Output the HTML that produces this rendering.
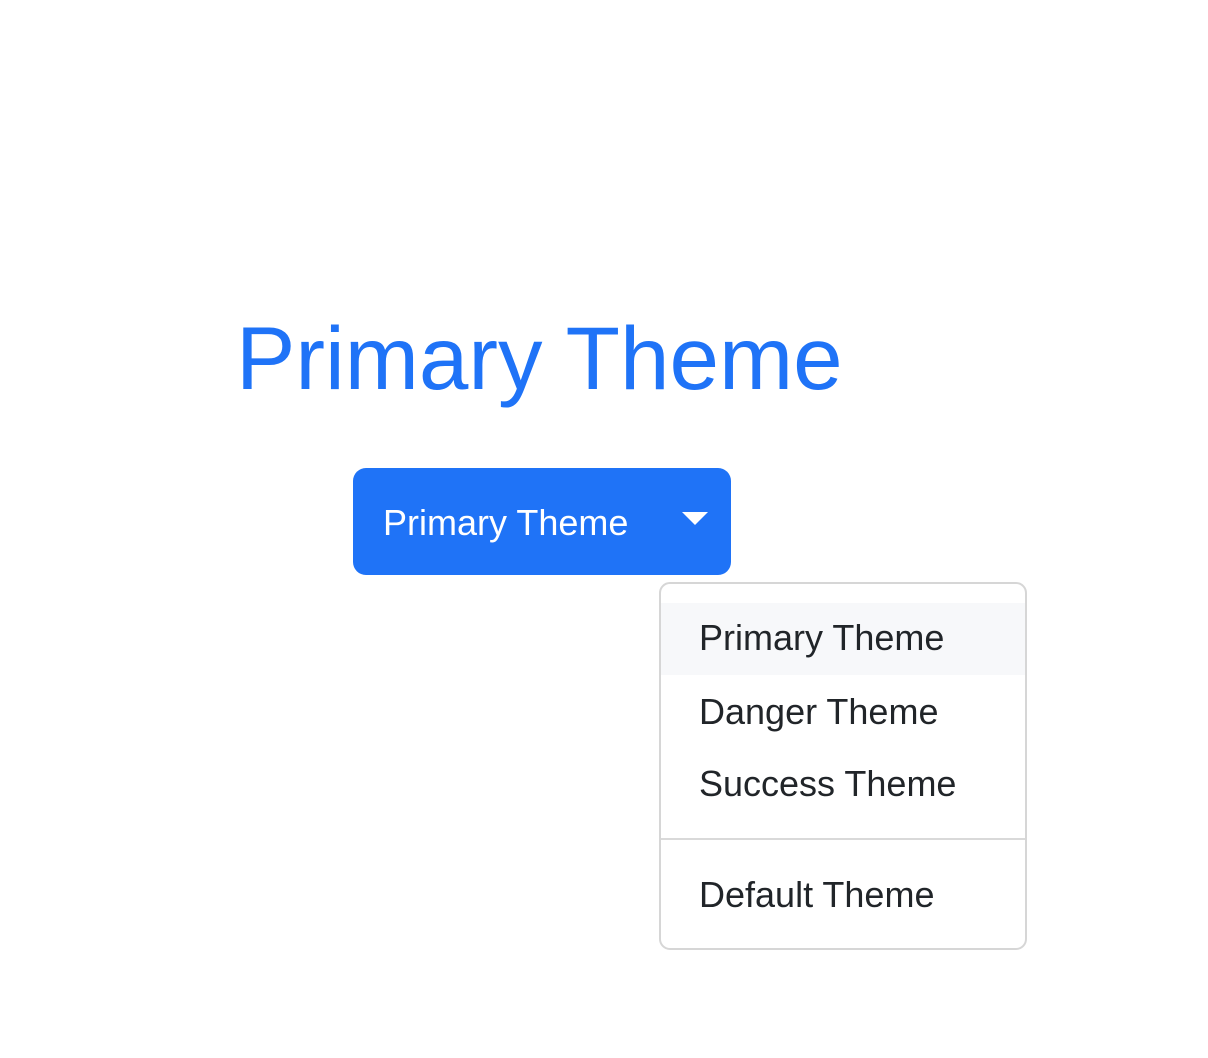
<!DOCTYPE html>
<html><head><style>
body{margin:0;width:1208px;height:1058px;background:#fff;font-family:"Liberation Sans",sans-serif;position:relative;overflow:hidden}
.h{position:absolute;left:236px;top:314px;font-size:89px;line-height:89px;color:#1f73f7;white-space:nowrap}
.btn{position:absolute;left:353px;top:468px;width:378px;height:107px;background:#1f73f7;border-radius:13px;color:#fff}
.btn span{position:absolute;left:30px;top:1px;line-height:107px;font-size:36px;white-space:nowrap}
.caret{position:absolute;left:682px;top:512px;width:0;height:0;border-left:13px solid transparent;border-right:13px solid transparent;border-top:13px solid #fff}
.dd{position:absolute;left:659px;top:582px;width:364px;height:364px;border:2px solid #d6d6d6;border-radius:11px;background:#fff}
.it{position:absolute;left:0;width:364px;height:72px;line-height:72px;font-size:36px;color:#212529;white-space:nowrap}
.it span{position:absolute;left:38px;top:-1px}
.div{position:absolute;left:0;width:364px;top:254px;height:2px;background:#d9d9d9}
</style></head><body>
<div class="h">Primary Theme</div>
<div class="btn"><span>Primary Theme</span></div>
<div class="caret"></div>
<div class="dd">
<div class="it" style="top:19px;background:#f7f8fa"><span>Primary Theme</span></div>
<div class="it" style="top:93px"><span>Danger Theme</span></div>
<div class="it" style="top:165px"><span>Success Theme</span></div>
<div class="div"></div>
<div class="it" style="top:276px"><span>Default Theme</span></div>
</div>
</body></html>
